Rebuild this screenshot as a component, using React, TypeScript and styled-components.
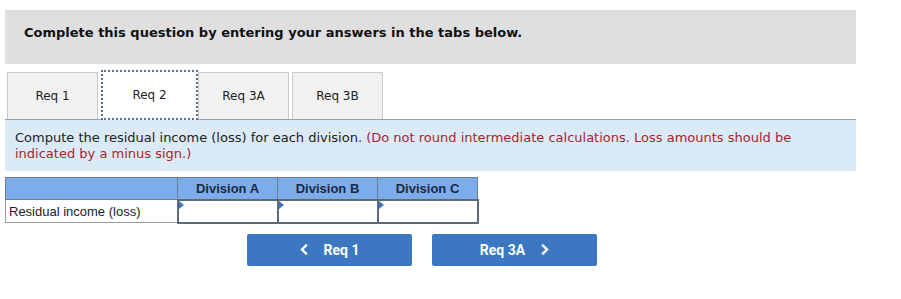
import React from "react";
import styled, { createGlobalStyle } from "styled-components";

const Global = createGlobalStyle`
  html, body { margin: 0; padding: 0; background: #ffffff; }
  body { font-family: "DejaVu Sans", Verdana, sans-serif; }
  * { box-sizing: border-box; }
`;

const Page = styled.div`
  padding: 10px 0 0 5px;
  width: 856px;
`;

const Header = styled.div`
  background: #dfdfdf;
  height: 54px;
  padding: 15px 0 0 19px;
  font-family: "DejaVu Sans", Verdana, sans-serif;
  font-weight: bold;
  font-size: 13px;
  line-height: 16px;
  color: #111;
`;

const TabList = styled.div`
  display: flex;
  align-items: flex-end;
  gap: 3px;
  padding-left: 2px;
  margin-top: 5px;
  height: 50px;
`;

const Tab = styled.div<{ $active?: boolean }>`
  display: flex;
  align-items: center;
  justify-content: center;
  font-family: "DejaVu Sans", Verdana, sans-serif;
  font-size: 12px;
  color: #222;
  width: ${(p) => (p.$active ? "97px" : "91px")};
  height: ${(p) => (p.$active ? "50px" : "47px")};
  margin-right: ${(p) => (p.$active ? "-3px" : "0")};
  margin-bottom: ${(p) => (p.$active ? "-1px" : "0")};
  background: ${(p) => (p.$active ? "#ffffff" : "#f1f1f1")};
  border: ${(p) => (p.$active ? "2px dotted #5d6f82" : "1px solid #c9c9c9")};
  border-bottom: ${(p) => (p.$active ? "2px dotted #5d6f82" : "none")};
  position: relative;
  z-index: ${(p) => (p.$active ? 2 : 1)};
`;

const Panel = styled.div`
  background: #dbeaf7;
  border-top: 1px solid #98a2ab;
  padding: 10px 10px 9px 10px;
  font-family: "DejaVu Sans", Verdana, sans-serif;
  font-size: 13px;
  line-height: 16px;
  color: #222;
`;

const Note = styled.span`
  color: #a3282e;
`;

const Table = styled.table`
  border-collapse: collapse;
  margin-top: 6px;
  font-family: "Liberation Sans", Arial, sans-serif;
  font-size: 13px;
`;

const HeadCell = styled.th<{ $w: number }>`
  background: #7dacea;
  border: 1px solid #6b7f93;
  color: #1b2940;
  font-weight: bold;
  height: 22px;
  padding: 0;
  text-align: center;
  width: ${(p) => p.$w}px;
`;

const LabelCell = styled.td`
  border: 1px solid #9a9a9a;
  height: 23px;
  padding: 1px 0 0 3px;
  color: #222;
  text-align: left;
`;

const InputCell = styled.td`
  border: 2px solid #5c6a78;
  height: 23px;
  padding: 0;
  position: relative;
  background: #fff;
`;

const Marker = styled.span`
  position: absolute;
  left: 0;
  top: 0;
  width: 0;
  height: 0;
  border-top: 4px solid transparent;
  border-bottom: 4px solid transparent;
  border-left: 5px solid #3b78c1;
`;

const NavRow = styled.div`
  display: flex;
  gap: 20px;
  margin: 10px 0 0 242px;
`;

const NavButton = styled.button`
  display: flex;
  align-items: center;
  justify-content: center;
  gap: 16px;
  width: 165px;
  height: 32px;
  border: none;
  border-radius: 2px;
  background: #3b78c1;
  color: #fff;
  font-family: Roboto, "Liberation Sans", Arial, sans-serif;
  font-weight: bold;
  font-size: 14px;
  padding: 0;
  cursor: pointer;
`;

const Chevron = ({ dir }: { dir: "left" | "right" }) => (
  <svg width="8" height="11" viewBox="0 0 8 11" fill="none">
    <path
      d={dir === "left" ? "M6 1.5 L2 5.5 L6 9.5" : "M2 1.5 L6 5.5 L2 9.5"}
      stroke="#fff"
      strokeWidth="2.4"
      strokeLinecap="square"
    />
  </svg>
);

export default function App() {
  return (
    <Page>
      <Global />
      <Header>Complete this question by entering your answers in the tabs below.</Header>
      <TabList>
        <Tab>Req 1</Tab>
        <Tab $active>Req 2</Tab>
        <Tab>Req 3A</Tab>
        <Tab>Req 3B</Tab>
      </TabList>
      <Panel>
        Compute the residual income (loss) for each division.{" "}
        <Note>
          (Do not round intermediate calculations. Loss amounts should be indicated by a minus
          sign.)
        </Note>
      </Panel>
      <Table>
        <thead>
          <tr>
            <HeadCell $w={172}></HeadCell>
            <HeadCell $w={100}>Division A</HeadCell>
            <HeadCell $w={100}>Division B</HeadCell>
            <HeadCell $w={100}>Division C</HeadCell>
          </tr>
        </thead>
        <tbody>
          <tr>
            <LabelCell>Residual income (loss)</LabelCell>
            <InputCell><Marker /></InputCell>
            <InputCell><Marker /></InputCell>
            <InputCell><Marker /></InputCell>
          </tr>
        </tbody>
      </Table>
      <NavRow>
        <NavButton>
          <Chevron dir="left" />
          <span>Req 1</span>
        </NavButton>
        <NavButton>
          <span>Req 3A</span>
          <Chevron dir="right" />
        </NavButton>
      </NavRow>
    </Page>
  );
}
